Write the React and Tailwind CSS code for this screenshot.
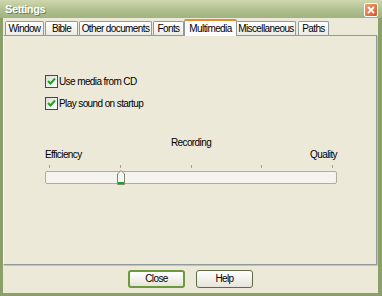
import React from "react";

const TABS = [
  { label: "Window", w: "w-[39px]", ml: "ml-[2px]" },
  { label: "Bible", w: "w-[33px]", ml: "ml-[1px]" },
  { label: "Other documents", w: "w-[73px]", ml: "ml-[1px]" },
  { label: "Fonts", w: "w-[31px]", ml: "ml-[1px]" },
  { label: "Multimedia", w: "w-[53px]", ml: "ml-[0px]", active: true },
  { label: "Miscellaneous", w: "w-[60px]", ml: "ml-[0px]" },
  { label: "Paths", w: "w-[31px]", ml: "ml-[2px]" },
];

function Checkbox({ label }) {
  return (
    <div className="flex items-center h-[13px]">
      <div className="w-[13px] h-[13px] border border-[#1c5180] bg-gradient-to-br from-[#dcdcd7] to-[#ffffff] flex items-center justify-center">
        <svg width="9" height="9" viewBox="0 0 9 9">
          <path d="M1 4 L3.5 6.5 L8 1.5" fill="none" stroke="#21a121" strokeWidth="2" />
        </svg>
      </div>
      <span className="ml-[1px] leading-[13px]">{label}</span>
    </div>
  );
}

export default function App() {
  return (
    <div
      className="w-[382px] h-[296px] flex flex-col bg-[#8aa068] text-[10px] tracking-[-0.6px] text-black"
      style={{ fontFamily: '"Liberation Sans", Arial, sans-serif' }}
    >
      {/* Title bar */}
      <div className="h-[18px] flex items-center justify-between pl-[5px] pr-[4px] bg-gradient-to-b from-[#cfd8b0] via-[#b3c292] to-[#9fb37f]">
        <span className="text-white font-bold text-[11px] tracking-[-0.4px] leading-none [text-shadow:1px_1px_0_#6f7f55]">
          Settings
        </span>
        <div className="w-[14px] h-[14px] mt-[2px] rounded-[2px] border border-white bg-gradient-to-br from-[#f0a070] to-[#d2552a] flex items-center justify-center">
          <svg width="8" height="8" viewBox="0 0 8 8">
            <path d="M1 1 L7 7 M7 1 L1 7" stroke="white" strokeWidth="1.8" />
          </svg>
        </div>
      </div>

      {/* Client area */}
      <div className="flex-1 ml-[3px] mr-[4px] mb-[3px] bg-[#ece9d8] flex flex-col">
        {/* Tabs */}
        <div className="flex items-end h-[17px] pt-[1px]">
          {TABS.map((t) => (
            <div
              key={t.label}
              className={[
                t.w,
                t.ml,
                "flex items-center justify-center border border-b-0 rounded-t-[2px] whitespace-nowrap",
                t.active
                  ? "h-[17px] -mb-px z-10 bg-[#fcfcfe] border-[#919b9c] border-t-2 border-t-[#e68b2c] -mx-[1px]"
                  : "h-[14px] border-[#919b9c] bg-gradient-to-b from-[#ffffff] to-[#ecebe6]",
              ].join(" ")}
            >
              <span className="leading-none">{t.label}</span>
            </div>
          ))}
        </div>

        {/* Panel */}
        <div className="h-[230px] border border-[#919b9c] border-l-white border-t-[#919b9c] mr-[1px] shadow-[1px_1px_0_#c5c2b2] bg-[#ece9d8] flex flex-col pl-[41px] pr-[39px]">
          <div className="mt-[39px] flex flex-col gap-[9px]">
            <Checkbox label="Use media from CD" />
            <Checkbox label="Play sound on startup" />
          </div>

          <div className="mt-[27px] text-center leading-[12px]">Recording</div>
          <div className="flex justify-between leading-[12px]">
            <span>Efficiency</span>
            <span>Quality</span>
          </div>

          <div className="mt-[4px] h-[3px] flex justify-between px-[4px]">
            {[0, 1, 2, 3, 4].map((i) => (
              <div key={i} className="w-px h-[3px] bg-[#a0a0a0]" />
            ))}
          </div>

          <div className="relative mt-[3px] h-[13px] border border-[#b0ada0] rounded-[2px] bg-[#f4f3ee]">
            <div className="absolute left-[71px] -top-[2px]">
              <svg width="8" height="15" viewBox="0 0 8 15">
                <path
                  d="M0.5 14.5 V4 L4 0.5 L7.5 4 V14.5 Z"
                  fill="#f7f7f4"
                  stroke="#7f8a6c"
                />
                <rect x="1" y="12" width="6" height="2" fill="#21a121" />
              </svg>
            </div>
          </div>
        </div>

        {/* Bottom buttons */}
        <div className="flex-1 flex items-start pt-[5px] pl-[125px] gap-[11px]">
          <button className="w-[57px] h-[18px] rounded-[3px] border-2 border-[#6c9a3a] bg-gradient-to-b from-[#ffffff] to-[#e6e4da] leading-none">
            Close
          </button>
          <button className="w-[57px] h-[18px] rounded-[3px] border border-[#5e6b45] bg-gradient-to-b from-[#ffffff] to-[#e6e4da] leading-none">
            Help
          </button>
        </div>
      </div>
    </div>
  );
}
